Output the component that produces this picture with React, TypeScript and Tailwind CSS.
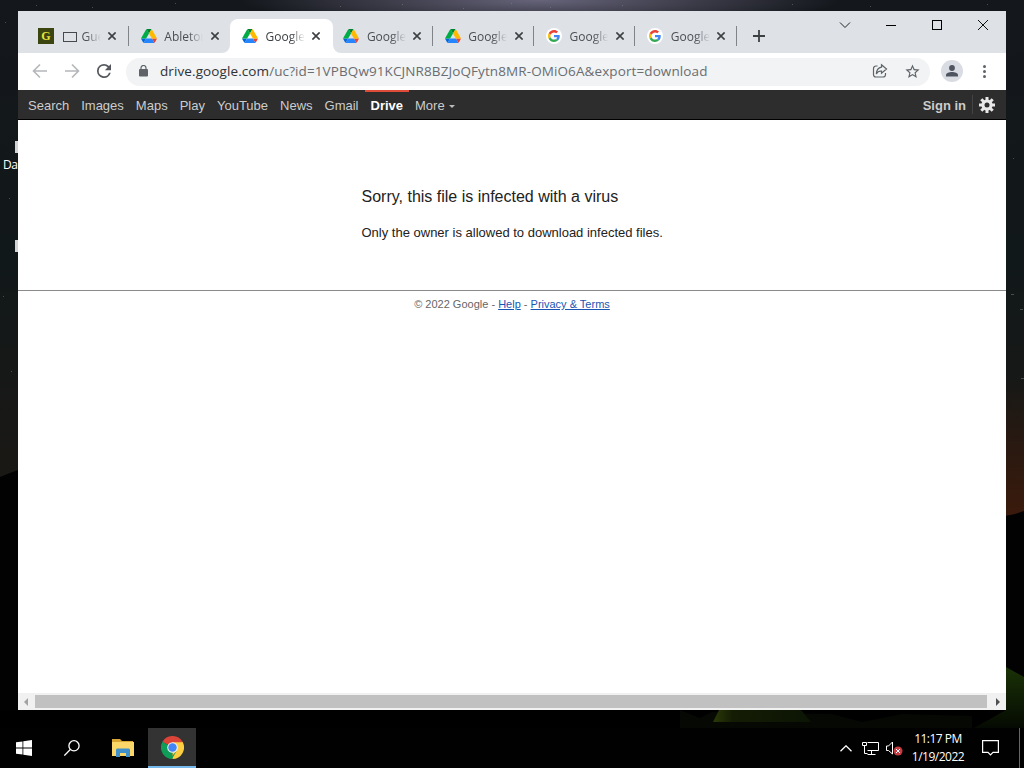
import clsx from "clsx";

type TabIcon = "guitar" | "drive" | "google";

const tabs: { icon: TabIcon; title: string; active?: boolean; divider?: boolean }[] = [
  { icon: "guitar", title: "Gue", divider: true },
  { icon: "drive", title: "Ableton" },
  { icon: "drive", title: "Google", active: true },
  { icon: "drive", title: "Google", divider: true },
  { icon: "drive", title: "Google", divider: true },
  { icon: "google", title: "Google", divider: true },
  { icon: "google", title: "Google", divider: true },
];

const navLinks = ["Search", "Images", "Maps", "Play", "YouTube", "News", "Gmail"];

function DriveIcon() {
  return (
    <svg viewBox="0 0 87.3 78" className="w-4 h-[14px] shrink-0">
      <path d="M6.6 66.85l3.85 6.65c.8 1.4 1.95 2.5 3.3 3.3L27.5 53H0c0 1.55.4 3.1 1.2 4.5z" fill="#0066da" />
      <path d="M43.65 25L29.9 1.2c-1.35.8-2.5 1.9-3.3 3.3L1.2 48.5A9.06 9.06 0 0 0 0 53h27.5z" fill="#00ac47" />
      <path d="M73.55 76.8c1.35-.8 2.5-1.9 3.3-3.3l1.6-2.75 7.65-13.25c.8-1.4 1.2-2.95 1.2-4.5H59.8l5.85 11.5z" fill="#ea4335" />
      <path d="M43.65 25L57.4 1.2C56.05.4 54.5 0 52.9 0H34.4c-1.6 0-3.15.45-4.5 1.2z" fill="#00832d" />
      <path d="M59.8 53H27.5L13.75 76.8c1.35.8 2.9 1.2 4.5 1.2h50.8c1.6 0 3.15-.45 4.5-1.2z" fill="#2684fc" />
      <path d="M73.4 26.5l-12.7-22c-.8-1.4-1.95-2.5-3.3-3.3L43.65 25 59.8 53h27.45c0-1.55-.4-3.1-1.2-4.5z" fill="#ffba00" />
    </svg>
  );
}

function GoogleIcon() {
  return (
    <span className="flex items-center justify-center w-4 h-4 rounded-full bg-white shrink-0">
      <svg viewBox="0 0 48 48" className="w-3 h-3">
        <path fill="#EA4335" d="M24 9.5c3.54 0 6.71 1.22 9.21 3.6l6.85-6.85C35.9 2.38 30.47 0 24 0 14.62 0 6.51 5.38 2.56 13.22l7.98 6.19C12.43 13.72 17.74 9.5 24 9.5z" />
        <path fill="#4285F4" d="M46.98 24.55c0-1.57-.15-3.09-.38-4.55H24v9.02h12.94c-.58 2.96-2.26 5.48-4.78 7.18l7.73 6c4.51-4.18 7.09-10.36 7.09-17.65z" />
        <path fill="#FBBC05" d="M10.53 28.59A14.5 14.5 0 0 1 9.77 24c0-1.6.27-3.14.76-4.59l-7.98-6.19A23.9 23.9 0 0 0 0 24c0 3.88.92 7.54 2.56 10.78z" />
        <path fill="#34A853" d="M24 48c6.48 0 11.93-2.13 15.89-5.81l-7.73-6c-2.15 1.45-4.92 2.3-8.16 2.3-6.26 0-11.57-4.22-13.47-9.91l-7.98 6.19C6.51 42.62 14.62 48 24 48z" />
      </svg>
    </span>
  );
}

function GuitarIcon() {
  return (
    <span className="flex items-center justify-center w-4 h-4 -ml-[1.500px] shrink-0 bg-[#3c4410] text-[#e6e63c] font-['Liberation_Serif',serif] font-bold text-[12px] leading-none">
      G
    </span>
  );
}

function Tab({ icon, title, active, divider }: (typeof tabs)[number]) {
  return (
    <div className="relative flex items-center w-[101.3px] h-[34px] pl-3">
      {active && (
        <>
          <span className="absolute left-0 top-0 w-[103px] h-full rounded-t-lg bg-white" />
          <svg viewBox="0 0 119 8" className="absolute -left-2 bottom-0 w-[119px] h-2 fill-white">
            <path d="M8 0v8H0a8 8 0 0 0 8-8zM111 0v8h8a8 8 0 0 1-8-8z" />
          </svg>
        </>
      )}
      <div className="relative flex items-center">
        {icon === "drive" && <DriveIcon />}
        {icon === "google" && <GoogleIcon />}
        {icon === "guitar" && <GuitarIcon />}
        <div
          className={clsx(
            "flex items-center overflow-hidden ml-[7.500px] pt-px h-5 w-[39px] text-[12px] whitespace-nowrap [mask-image:linear-gradient(to_right,#000_62%,transparent)]",
            active ? "text-[#3c4043]" : "text-[#4b4f54]"
          )}
        >
          {icon === "guitar" && <span className="w-[14px] h-[10px] ml-px mr-[5px] border border-[#45494d] shrink-0" />}
          {title}
        </div>
        <svg viewBox="0 0 8 8" className="w-2 h-2 ml-[7.500px] shrink-0" stroke="#3c4043" strokeWidth="1.6">
          <path d="M.4.4l7.200 7.200M7.600.4L.4 7.600" />
        </svg>
      </div>
      {divider && <span className="absolute right-0 top-[7px] w-px h-5 bg-[#808489]" />}
    </div>
  );
}

function TabStrip() {
  return (
    <div className="flex h-[42px] pt-2 pl-[9.500px] bg-[#dee1e6]">
      {tabs.map((tab, i) => (
        <Tab key={i} {...tab} />
      ))}
      <svg viewBox="0 0 12 12" className="w-3 h-3 mt-[11px] ml-4" stroke="#3c4043" strokeWidth="1.8">
        <path d="M6 0v12M0 6h12" />
      </svg>
      <div className="flex items-center ml-auto -mt-2 h-[28px]">
        <svg viewBox="0 0 12 12" className="w-3 h-3 mr-[35px]" fill="none" stroke="#222">
          <path d="M1 3.500l5 5 5-5" />
        </svg>
        <span className="w-[10px] h-px bg-black mr-[36px] mt-px" />
        <span className="w-[10px] h-[10px] border border-black mr-[36px]" />
        <svg viewBox="0 0 10 10" className="w-[10px] h-[10px] mr-[18px]" stroke="#111">
          <path d="M0 0l10 10M10 0L0 10" />
        </svg>
      </div>
    </div>
  );
}

function Toolbar() {
  return (
    <div className="flex items-center h-[37px] pl-[14px] bg-white">
      <svg viewBox="0 0 16 16" className="w-4 h-4 -mt-px" fill="none" stroke="#b4b7ba" strokeWidth="1.6">
        <path d="M15 8H2M8 1.500L1.500 8 8 14.500" />
      </svg>
      <svg viewBox="0 0 16 16" className="w-4 h-4 ml-4 -mt-px" fill="none" stroke="#b4b7ba" strokeWidth="1.6">
        <path d="M1 8h13M8 1.500L14.500 8 8 14.500" />
      </svg>
      <svg viewBox="4 4 16 16" className="w-[14px] h-[14px] ml-[17px] -mt-px fill-[#55595e]">
        <path d="M17.650 6.350A7.960 7.960 0 0 0 12 4a8 8 0 1 0 7.730 10h-2.080A6 6 0 1 1 12 6c1.660 0 3.140.69 4.220 1.780L13 11h7V4z" />
      </svg>
      <div className="flex items-center w-[804px] h-[28px] ml-[15px] pl-[13px] pr-[9px] rounded-full bg-[#f1f3f4]">
        <svg viewBox="0 0 9 12" className="w-[9px] h-3 -mt-px shrink-0">
          <rect y="4" width="9" height="7.500" rx="1" fill="#5f6368" />
          <path d="M2 5V3a2.500 2.500 0 0 1 5 0v2" fill="none" stroke="#5f6368" strokeWidth="1.200" />
        </svg>
        <span className="ml-[12px] text-[13.500px] tracking-[0.100px] whitespace-nowrap text-[#6a6d71]">
          <span className="text-[#303236]">drive.google.com</span>
          /uc?id=1VPBQw91KCJNR8BZJoQFytn8MR-OMiO6A&amp;export=download
        </span>
        <svg viewBox="0 0 16 16" className="w-4 h-4 ml-auto -mt-px shrink-0" fill="none" stroke="#5f6368" strokeWidth="1.200">
          <path d="M5.500 3H4a2.500 2.500 0 0 0-2.500 2.500v6A2.500 2.500 0 0 0 4 14h7a2.500 2.500 0 0 0 2.500-2.500V10" />
          <path d="M9.500 1.800L14.500 6l-5 4.200V8C7 7.800 5.300 8.900 4.300 11c.2-3.700 1.900-6.300 5.200-6.900z" />
        </svg>
        <svg viewBox="0 0 24 24" className="w-[17px] h-[17px] ml-4 -mt-px shrink-0 fill-[#5f6368]">
          <path d="M22 9.240l-7.190-.62L12 2 9.190 8.630 2 9.240l5.460 4.730L5.820 21 12 17.270 18.180 21l-1.630-7.030zM12 15.400l-3.760 2.270 1-4.280-3.320-2.880 4.380-.38L12 6.100l1.710 4.040 4.380.38-3.320 2.880 1 4.280z" />
        </svg>
      </div>
      <span className="flex items-center justify-center w-[22px] h-[22px] -mt-px ml-[11px] rounded-full bg-[#dadce3]">
        <svg viewBox="0 0 12 12" className="w-3 h-3 fill-[#4f5461]">
          <circle cx="6" cy="3" r="2.900" />
          <path d="M0 11.500V10c0-2 3-3 6-3s6 1 6 3v1.500z" />
        </svg>
      </span>
      <div className="flex flex-col gap-[2px] ml-5">
        <span className="w-[3px] h-[3px] rounded-full bg-[#5f6368]" />
        <span className="w-[3px] h-[3px] rounded-full bg-[#5f6368]" />
        <span className="w-[3px] h-[3px] rounded-full bg-[#5f6368]" />
      </div>
    </div>
  );
}

function GoogleBar() {
  return (
    <div className="flex h-[30px] pl-[10px] border-b border-black bg-[#2d2d2d] font-['Liberation_Sans',Arial,sans-serif] text-[13px] leading-[32px] text-[#ccc]">
      {navLinks.map((link) => (
        <a key={link} href="#" className="mr-3">
          {link}
        </a>
      ))}
      <a href="#" className="-ml-[6px] mr-[6px] pl-[6px] pr-[6px] h-full border-t-2 border-[#dd4b39] font-bold leading-[28px] text-white">
        Drive
      </a>
      <a href="#" className="flex h-full">
        More
        <span className="self-center ml-[4px] mt-[3px] border-x-[3px] border-x-transparent border-t-[3px] border-t-[#bbb]" />
      </a>
      <a href="#" className="ml-auto font-bold">
        Sign in
      </a>
      <span className="w-px h-[19px] mt-[5px] ml-[6px] mr-[6px] bg-[#444]" />
      <svg viewBox="0 0 16 16" className="w-4 h-4 mt-[7px] mr-[11px]">
        <g stroke="#e8e8e8" strokeWidth="3">
          <path d="M8 0v16M0 8h16M2.300 2.300l11.400 11.400M13.700 2.300L2.300 13.700" />
        </g>
        <circle cx="8" cy="8" r="5.600" fill="#e8e8e8" />
        <circle cx="8" cy="8" r="2.500" fill="#2d2d2d" />
      </svg>
    </div>
  );
}

function Page() {
  return (
    <div className="flex flex-col flex-1 bg-white font-['Liberation_Sans',Arial,sans-serif] text-[#222]">
      <div className="h-[170px] pt-[67px] pl-[343.500px]">
        <p className="text-[16px] leading-5">Sorry, this file is infected with a virus</p>
        <p className="mt-[17px] text-[13px] leading-[18px]">Only the owner is allowed to download infected files.</p>
      </div>
      <div className="border-t border-[#8a8a8a] pt-[6px] text-center text-[11px] leading-[14px] text-[#666]">
        © 2022 Google -{" "}
        <a href="#" className="text-[#1a55b4] underline">
          Help
        </a>{" "}
        -{" "}
        <a href="#" className="text-[#1a55b4] underline">
          Privacy &amp; Terms
        </a>
      </div>
    </div>
  );
}

function ScrollBar() {
  return (
    <div className="flex items-center h-[17px] bg-[#f1f1f1]">
      <span className="ml-[6px] mr-[7px] border-y-[4px] border-y-transparent border-r-[4px] border-r-[#a3a3a3]" />
      <span className="flex-1 h-[13px] bg-[#c1c1c1]" />
      <span className="ml-[9px] mr-[6px] border-y-[4px] border-y-transparent border-l-[4px] border-l-[#505050]" />
    </div>
  );
}

function ChromeIcon() {
  return (
    <svg viewBox="0 0 48 48" className="w-[23px] h-[23px]">
      <path fill="#db4437" d="M24 24L3.200 12A24 24 0 0 1 44.800 12z" />
      <path fill="#0f9d58" d="M24 24L24 48A24 24 0 0 1 3.200 12z" />
      <path fill="#ffcd40" d="M24 24L44.800 12A24 24 0 0 1 24 48z" />
      <path fill="#db4437" d="M24 13h21.300L44.800 12H24z" />
      <path fill="#0f9d58" d="M14.500 29.500L3.200 12l1-1.600zM33.500 29.500L22.800 48l-4-1z" />
      <path fill="#ffcd40" d="M24 13h21.300L33.500 29.500z" />
      <circle cx="24" cy="24" r="11" fill="#f1f1f1" />
      <circle cx="24" cy="24" r="8.800" fill="#4285f4" />
    </svg>
  );
}

function Taskbar() {
  return (
    <div className="relative flex items-center h-10 bg-[#010101] text-white">
      <svg viewBox="0 0 16 16" className="w-4 h-4 ml-4 fill-white">
        <path d="M0 2.300l6.500-.9v6.100H0zM7.300 1.300L16 0v7.500H7.300zM0 8.400h6.500v6.200L0 13.700zM7.300 8.400H16V16l-8.700-1.300z" />
      </svg>
      <svg viewBox="0 0 16 16" className="w-4 h-4 ml-8" fill="none" stroke="#fff" strokeWidth="1.300">
        <circle cx="10" cy="5.800" r="5.100" />
        <path d="M6.300 9.500L.3 15.600" />
      </svg>
      <svg viewBox="0 0 22 18" className="w-[22px] h-[18px] ml-8">
        <path d="M0 0h8l2 2h11v4H0z" fill="#d9a634" />
        <path d="M0 3h22v14H0z" fill="#fbd668" />
        <path d="M4 18v-7.500l1-1h12l1 1V18h-4v-4H8v4z" fill="#4090cc" />
      </svg>
      <div className="flex items-center justify-center w-12 h-full ml-[14px] bg-[#333] border-b-2 border-[#76b9ed]">
        <ChromeIcon />
      </div>
      <svg viewBox="0 0 12 7" className="w-3 h-[7px] ml-auto" fill="none" stroke="#fff" strokeWidth="1.300">
        <path d="M.5 6.300L6 .8l5.500 5.500" />
      </svg>
      <svg viewBox="0 0 17 14" className="w-[17px] h-[14px] ml-[10px]" fill="none" stroke="#fff">
        <path d="M5.500 1.500h11v8h-11M9.500 10v3M5.500 13.500h8M.5 1.500h4v3h-4zM2.500 4.500v8h3" />
      </svg>
      <svg viewBox="0 0 17 15" className="w-[17px] h-[15px] ml-[7px]">
        <path d="M.5 5h2L6.500 1v12l-4-3.500h-2z" fill="none" stroke="#fff" />
        <circle cx="12" cy="10" r="4.500" fill="#c83c43" />
        <path d="M10 8l4 4M14 8l-4 4" stroke="#fff" />
      </svg>
      <div className="w-[60px] ml-[5px] text-center text-[12px] leading-[18px] tracking-[-0.500px] whitespace-nowrap">
        <p>11:17 PM</p>
        <p>1/19/2022</p>
      </div>
      <svg viewBox="0 0 17 16" className="w-[17px] h-4 ml-[14px] mr-[20px]" fill="none" stroke="#fff" strokeWidth="1.200">
        <path d="M.6.6h15.800v11.800H11l-2.500 2.500L6 12.400H.6z" />
      </svg>
      <span className="w-px h-full mr-[4px] bg-[#666]" />
    </div>
  );
}

export default function App() {
  return (
    <div className="relative flex flex-col w-[1024px] h-[768px] overflow-hidden bg-black font-['Open_Sans','Noto_Sans',sans-serif]">
      {/* Night sky wallpaper, visible round the window */}
      <div className="absolute inset-x-0 top-0 h-[520px] bg-linear-to-b from-[#14171c] via-[#111819] to-[#1c1814]" />
      <div className="absolute inset-x-0 top-0 h-3 bg-[radial-gradient(ellipse_300px_30px_at_540px_0px,#67647a,transparent)]" />
      <div className="absolute right-0 top-[380px] w-[18px] h-[135px] bg-linear-to-b from-transparent to-[#3a1a0c]" />
      <svg viewBox="0 0 1024 768" className="absolute inset-0 w-[1024px] h-[768px]">
        <defs>
          <linearGradient id="hill" x1="0" y1="0" x2="0" y2="1">
            <stop offset="0" stopColor="#1a3207" />
            <stop offset="1" stopColor="#050a02" />
          </linearGradient>
          <linearGradient id="tent" x1="0" y1="0" x2="1" y2="0">
            <stop offset="0" stopColor="#2b3a08" />
            <stop offset=".2" stopColor="#141c04" />
            <stop offset="1" stopColor="#0c1504" />
          </linearGradient>
        </defs>
        <path d="M0 477l10-4 8-3v240H0zM1006 516l9-2 9-3v210h-18z" fill="#020202" />
        <path d="M680 710l20 8 12-6 120 2 30 8 40-8 70 2v12H680z" fill="#080d05" opacity=".6" />
        <path d="M1006 667l18 10v51h-50l32-18z" fill="url(#hill)" />
        <path d="M719 710h82l10 12h-98z" fill="url(#tent)" />
        <g fill="#879191" opacity=".45">
          <path d="M5 22h1v1H5zM36 5h1v1h-1zM92 7h1v1h-1zM175 3h1v1h-1zM340 6h1v1h-1zM402 4h1v1h-1zM463 8h1v1h-1zM511 3h1v1h-1zM550 7h1v1h-1zM622 5h1v1h-1zM792 4h1v1h-1zM870 6h1v1h-1zM987 4h1v1h-1zM9 198h1v1H9zM3 296h1v1H3zM11 371h1v1h-1zM1011 294h3v1h-3zM1020 309h3v1h-3zM1021 378h3v1h-3zM1013 158h1v1h-1z" />
        </g>
        <path d="M15 141h3v12h-3zM15 240h3v12h-3z" fill="#d5d5d5" />
      </svg>
      <span className="absolute left-[3px] top-[157px] text-[12px] leading-4 tracking-[-0.500px] text-white">Da</span>

      <div className="relative flex flex-col w-[988px] h-[699px] mt-[11px] ml-[18px]">
        <TabStrip />
        <Toolbar />
        <GoogleBar />
        <Page />
        <ScrollBar />
      </div>
      <div className="mt-auto">
        <Taskbar />
      </div>
    </div>
  );
}
